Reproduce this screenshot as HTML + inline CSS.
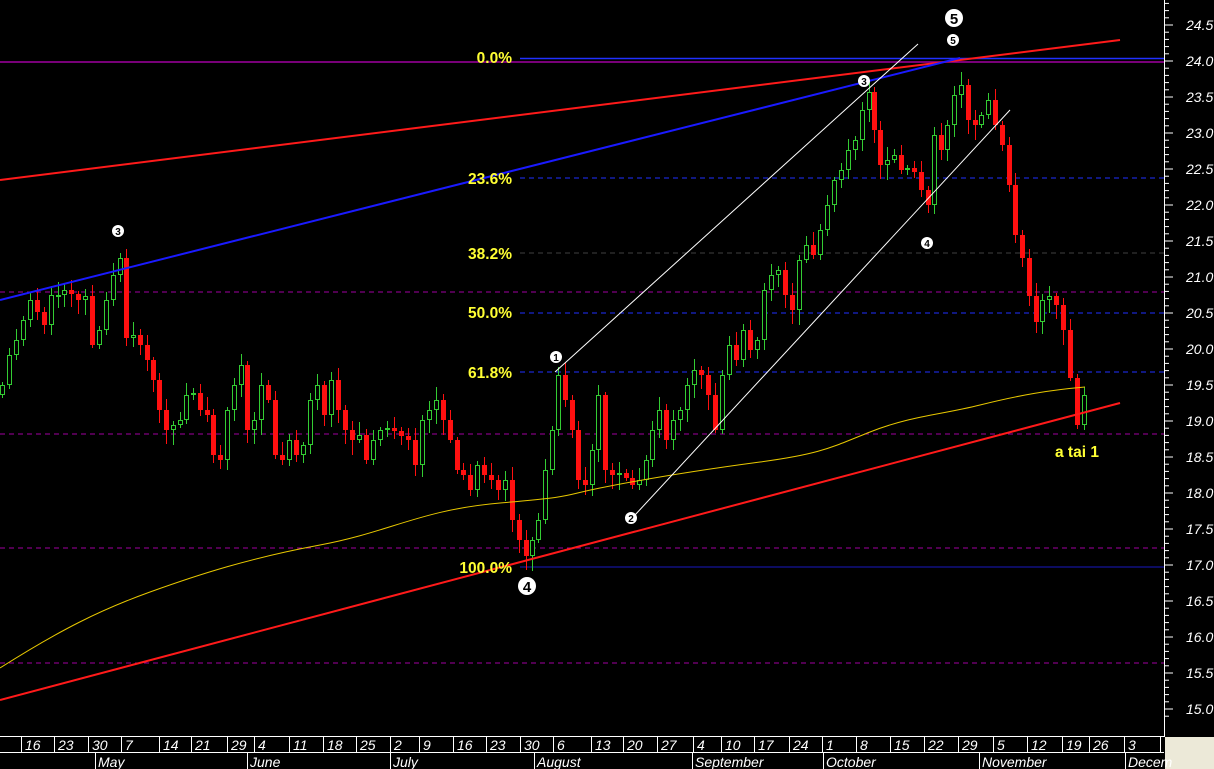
<!DOCTYPE html>
<html><head><meta charset="utf-8"><style>
html,body{margin:0;padding:0;background:#000;width:1214px;height:769px;overflow:hidden}
svg{display:block}
.ax{font-family:"Liberation Sans",sans-serif;font-style:italic;font-size:14px;fill:#fff}
.fib{font-family:"Liberation Sans",sans-serif;font-weight:bold;font-size:15.5px;fill:#ffff33}
.mk{font-family:"Liberation Sans",sans-serif;font-weight:bold;fill:#000;text-anchor:middle}
</style></head><body>
<svg id="s" width="1214" height="769" xmlns="http://www.w3.org/2000/svg">
<rect width="1214" height="769" fill="#000"/>
<g stroke-dasharray="5,4" stroke-width="1">
<line x1="0" y1="292" x2="1164" y2="292" stroke="#a000a0"/>
<line x1="0" y1="434" x2="1164" y2="434" stroke="#a000a0"/>
<line x1="0" y1="548" x2="1164" y2="548" stroke="#a000a0"/>
<line x1="0" y1="663" x2="1164" y2="663" stroke="#a000a0"/>
<line x1="520" y1="178" x2="1164" y2="178" stroke="#2030ff"/>
<line x1="520" y1="253" x2="1164" y2="253" stroke="#404040"/>
<line x1="520" y1="313" x2="1164" y2="313" stroke="#2030ff"/>
<line x1="520" y1="372" x2="1164" y2="372" stroke="#2030ff"/>
</g>
<line x1="0" y1="62" x2="1164" y2="62" stroke="#a000a0" stroke-width="1.5"/>
<line x1="520" y1="58.5" x2="1164" y2="58.5" stroke="#2030ff" stroke-width="1.5"/>
<line x1="520" y1="567" x2="1164" y2="567" stroke="#1818c0" stroke-width="1"/>
<g id="candles"></g>
<path d="M0,668 C60,630 100,610 150,592 S250,558 320,545 S420,510 500,503 S560,496 600,488 S700,470 760,462 S830,448 870,432 S940,415 980,405 S1050,390 1085,387" fill="none" stroke="#e8c800" stroke-width="1"/>
<line x1="0" y1="180" x2="1120" y2="40" stroke="#ff1a1a" stroke-width="2"/>
<line x1="0" y1="700" x2="1120" y2="403" stroke="#ff1a1a" stroke-width="2"/>
<line x1="0" y1="300" x2="960" y2="58" stroke="#1a1aff" stroke-width="2"/>
<line x1="555" y1="372" x2="918" y2="44" stroke="#fff" stroke-width="1"/>
<line x1="635" y1="515" x2="1010" y2="110" stroke="#fff" stroke-width="1"/>
<text class="fib" x="512" y="63" text-anchor="end">0.0%</text>
<text class="fib" x="512" y="184" text-anchor="end">23.6%</text>
<text class="fib" x="512" y="259" text-anchor="end">38.2%</text>
<text class="fib" x="512" y="318" text-anchor="end">50.0%</text>
<text class="fib" x="512" y="378" text-anchor="end">61.8%</text>
<text class="fib" x="512" y="573" text-anchor="end">100.0%</text>
<text class="fib" x="1055" y="457">a tai 1</text>
<g>
<circle cx="118" cy="231" r="6" fill="#fff"/><text class="mk" x="118" y="235" font-size="10">3</text>
<circle cx="556" cy="357" r="6" fill="#fff"/><text class="mk" x="556" y="361" font-size="10">1</text>
<circle cx="631" cy="518" r="6" fill="#fff"/><text class="mk" x="631" y="522" font-size="10">2</text>
<circle cx="864" cy="81" r="6" fill="#fff"/><text class="mk" x="864" y="85" font-size="10">3</text>
<circle cx="953" cy="40" r="6" fill="#fff"/><text class="mk" x="953" y="44" font-size="10">5</text>
<circle cx="927" cy="243" r="6" fill="#fff"/><text class="mk" x="927" y="247" font-size="10">4</text>
<circle cx="954" cy="18" r="9" fill="#fff"/><text class="mk" x="954" y="24" font-size="15">5</text>
<circle cx="527" cy="586" r="9" fill="#fff"/><text class="mk" x="527" y="592" font-size="15">4</text>
</g>
<line x1="1164.5" y1="0" x2="1164.5" y2="737" stroke="#fff"/>
<g id="ticks"></g>
<rect x="0" y="736" width="1164" height="33" fill="#000"/>
<line x1="0" y1="736.5" x2="1164" y2="736.5" stroke="#fff"/>
<line x1="0" y1="752.5" x2="1164" y2="752.5" stroke="#fff"/>
<rect x="1165" y="737" width="49" height="32" fill="#ece9d8"/>
<g id="dates"></g>
</svg>
<script>
(function(){
var NS="http://www.w3.org/2000/svg";
function el(p,t,a){var e=document.createElementNS(NS,t);for(var k in a)e.setAttribute(k,a[k]);p.appendChild(e);return e;}
var d=[[2,385],[9,355],[16,340],[23,320],[30,300],[37,312],[44,325],[51,295],[58,295],[64,290],[71,294],[78,300],[85,296],[92,345],[99,330],[106,300],[113,275],[120,258],[126,338],[133,335],[140,345],[147,360],[153,380],[159,410],[166,430],[173,425],[180,420],[186,395],[193,393],[200,410],[207,415],[213,455],[220,460],[227,410],[234,385],[241,365],[247,430],[254,420],[261,385],[268,400],[275,455],[282,460],[289,440],[296,455],[303,445],[310,400],[317,385],[324,415],[331,380],[338,410],[345,430],[352,440],[359,435],[366,460],[373,440],[380,430],[387,428],[394,431],[401,436],[408,440],[415,465],[422,420],[429,410],[436,400],[443,420],[450,440],[457,470],[463,475],[470,490],[477,465],[484,475],[491,480],[498,490],[505,480],[512,520],[519,540],[526,556],[532,540],[538,520],[545,470],[552,430],[558,375],[565,400],[572,430],[578,480],[585,485],[592,450],[598,395],[605,470],[612,475],[619,473],[626,478],[632,485],[639,480],[646,460],[652,430],[659,410],[666,440],[673,420],[680,410],[687,385],[694,370],[701,375],[708,395],[715,430],[722,375],[729,345],[736,360],[743,330],[750,350],[757,340],[764,290],[771,275],[778,270],[785,295],[792,310],[799,260],[806,245],[813,255],[820,230],[827,205],[834,180],[841,170],[848,150],[855,140],[862,110],[869,92],[874,130],[880,165],[887,160],[894,155],[901,170],[907,168],[914,172],[921,190],[928,205],[934,135],[941,150],[947,125],[954,95],[961,85],[968,120],[975,125],[981,115],[988,100],[995,125],[1002,145],[1009,185],[1015,235],[1022,258],[1029,296],[1036,322],[1042,300],[1049,296],[1056,305],[1063,330],[1070,378],[1077,425],[1084,395]];
var g=document.getElementById("candles");var prev=395;
for(var i=0;i<d.length;i++){var x=d[i][0],c=d[i][1],o=prev;
 var red=c>o;var yt=Math.min(o,c),yb=Math.max(o,c);if(yb-yt<2){yb=yt+2;}
 var hw=3+(i*37%11),lw=3+(i*53%13);var col=red?"#ff1010":"#33cc33";
 el(g,"line",{x1:x+0.5,y1:yt-hw,x2:x+0.5,y2:yb+lw,stroke:col,"stroke-width":1});
 if(red)el(g,"rect",{x:x-2,y:yt,width:5,height:yb-yt,fill:col});
 else el(g,"rect",{x:x-1.5,y:yt+0.5,width:4,height:Math.max(1,yb-yt-1),fill:"#000",stroke:col,"stroke-width":1});
 prev=c;}
var t=document.getElementById("ticks");
for(var k=0;k<=100;k++){var p=24.9-k*0.1;var y=25+(24.5-p)*72;if(y<0||y>735)continue;
 var major=Math.abs(p*2-Math.round(p*2))<0.01;
 el(t,"line",{x1:1164,y1:y,x2:major?1173:1169,y2:y,stroke:"#fff"});
 if(major){var tx=el(t,"text",{x:1186,y:y+5,"class":"ax"});tx.textContent=p.toFixed(1);}}
var dg=document.getElementById("dates");
var days=[[25,"16"],[58,"23"],[92,"30"],[125,"7"],[163,"14"],[195,"21"],[231,"29"],[258,"4"],[293,"11"],[327,"18"],[360,"25"],[394,"2"],[423,"9"],[457,"16"],[490,"23"],[524,"30"],[557,"6"],[595,"13"],[627,"20"],[661,"27"],[697,"4"],[725,"10"],[758,"17"],[793,"24"],[826,"1"],[860,"8"],[894,"15"],[928,"22"],[962,"29"],[997,"5"],[1031,"12"],[1066,"19"],[1093,"26"],[1128,"3"]];
days.forEach(function(a){el(dg,"line",{x1:a[0]-3.5,y1:737,x2:a[0]-3.5,y2:752,stroke:"#fff"});var tx=el(dg,"text",{x:a[0],y:750,"class":"ax"});tx.textContent=a[1];});
el(dg,"line",{x1:1160.5,y1:737,x2:1160.5,y2:752,stroke:"#fff"});
var mon=[[98,"May"],[250,"June"],[393,"July"],[537,"August"],[695,"September"],[826,"October"],[982,"November"],[1128,"Decem"]];
mon.forEach(function(a){el(dg,"line",{x1:a[0]-2.5,y1:753,x2:a[0]-2.5,y2:769,stroke:"#fff"});var tx=el(dg,"text",{x:a[0],y:767,"class":"ax"});tx.textContent=a[1];});
})();
</script>
</body></html>
